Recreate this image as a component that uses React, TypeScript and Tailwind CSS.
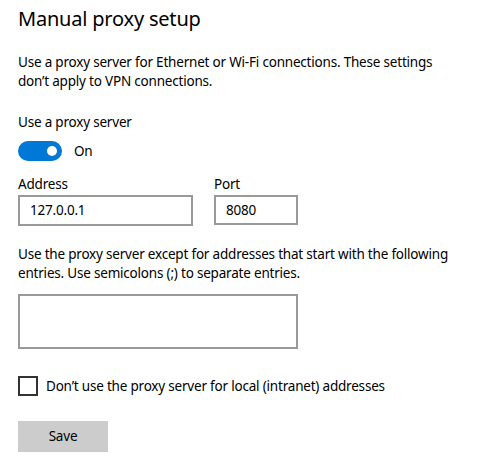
export default function App() {
  return (
    <div className="w-[478px] h-[459px] bg-white text-black overflow-hidden" style={{ fontFamily: '"Noto Sans", sans-serif' }}>
      <div className="pl-[18px] pt-[5px] text-[13.5px] tracking-[-0.2px]">
        <h1 className="text-[20px] leading-[28px] font-normal tracking-[-0.2px]">Manual proxy setup</h1>
        <p className="mt-[20px] leading-[19px] w-[428px]">
          Use a proxy server for Ethernet or Wi-Fi connections. These settings don’t apply to VPN connections.
        </p>
        <p className="mt-[22px] leading-[19px]">Use a proxy server</p>
        <div className="mt-[9px] flex items-center gap-3">
          <button className="w-[44px] h-[20px] rounded-full bg-[#0078d7] flex items-center justify-end pr-[5px]">
            <span className="w-[10px] h-[10px] rounded-full bg-white" />
          </button>
          <span className="leading-[19px]">On</span>
        </div>
        <div className="mt-[14px] flex gap-[21px]">
          <div className="flex flex-col">
            <label className="leading-[19px]">Address</label>
            <div className="mt-[1px] w-[175px] h-[31px] border-2 border-[#999] flex items-center pl-[10px]">127.0.0.1</div>
          </div>
          <div className="flex flex-col">
            <label className="leading-[19px]">Port</label>
            <div className="mt-[1px] w-[84px] h-[30px] border-2 border-[#999] flex items-center pl-[10px]">8080</div>
          </div>
        </div>
        <p className="mt-[19px] leading-[19px] w-[450px]">
          Use the proxy server except for addresses that start with the following entries. Use semicolons (;) to separate entries.
        </p>
        <div className="mt-[11px] w-[280px] h-[55px] border-2 border-[#999]" />
        <div className="mt-[27px] flex items-center gap-[8px]">
          <span className="w-[20px] h-[20px] border-2 border-[#333]" />
          <span className="leading-[19px]">Don’t use the proxy server for local (intranet) addresses</span>
        </div>
        <button className="mt-[25px] w-[90px] h-[31px] bg-[#cccccc]">Save</button>
      </div>
    </div>
  );
}
